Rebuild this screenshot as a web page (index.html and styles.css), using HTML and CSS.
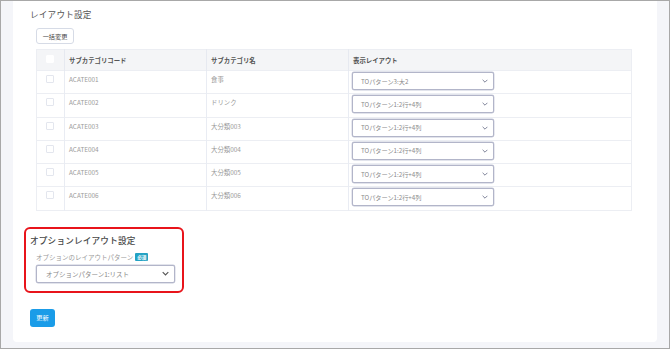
FILE: index.html
```html
<!DOCTYPE html>
<html lang="ja">
<head>
    <meta charset="UTF-8">
    <title>レイアウト設定</title>
    <link rel="stylesheet" href="styles.css">
</head>
<body>
<div class="frame">
    <div class="card">
        <h2 class="section-title">レイアウト設定</h2>

        <div class="table-area">
            <button class="btn-outline">一括変更</button>

            <table class="layout-table">
                <colgroup>
                    <col class="col-check">
                    <col class="col-code">
                    <col class="col-name">
                    <col>
                </colgroup>
                <thead>
                    <tr>
                        <th class="cell-check"><span class="check check-head"></span></th>
                        <th>サブカテゴリコード</th>
                        <th>サブカテゴリ名</th>
                        <th>表示レイアウト</th>
                    </tr>
                </thead>
                <tbody>
                    <tr>
                        <td class="cell-check"><span class="check"></span></td>
                        <td>ACATE001</td>
                        <td>食事</td>
                        <td class="cell-select">
                            <div class="select">TOパターン3:大2<svg class="chev" viewBox="0 0 10 6"><path d="M1 1l4 4 4-4"/></svg></div>
                        </td>
                    </tr>
                    <tr>
                        <td class="cell-check"><span class="check"></span></td>
                        <td>ACATE002</td>
                        <td>ドリンク</td>
                        <td class="cell-select">
                            <div class="select">TOパターン1:2行+4列<svg class="chev" viewBox="0 0 10 6"><path d="M1 1l4 4 4-4"/></svg></div>
                        </td>
                    </tr>
                    <tr>
                        <td class="cell-check"><span class="check"></span></td>
                        <td>ACATE003</td>
                        <td>大分類003</td>
                        <td class="cell-select">
                            <div class="select">TOパターン1:2行+4列<svg class="chev" viewBox="0 0 10 6"><path d="M1 1l4 4 4-4"/></svg></div>
                        </td>
                    </tr>
                    <tr>
                        <td class="cell-check"><span class="check"></span></td>
                        <td>ACATE004</td>
                        <td>大分類004</td>
                        <td class="cell-select">
                            <div class="select">TOパターン1:2行+4列<svg class="chev" viewBox="0 0 10 6"><path d="M1 1l4 4 4-4"/></svg></div>
                        </td>
                    </tr>
                    <tr>
                        <td class="cell-check"><span class="check"></span></td>
                        <td>ACATE005</td>
                        <td>大分類005</td>
                        <td class="cell-select">
                            <div class="select">TOパターン1:2行+4列<svg class="chev" viewBox="0 0 10 6"><path d="M1 1l4 4 4-4"/></svg></div>
                        </td>
                    </tr>
                    <tr>
                        <td class="cell-check"><span class="check"></span></td>
                        <td>ACATE006</td>
                        <td>大分類006</td>
                        <td class="cell-select">
                            <div class="select">TOパターン1:2行+4列<svg class="chev" viewBox="0 0 10 6"><path d="M1 1l4 4 4-4"/></svg></div>
                        </td>
                    </tr>
                </tbody>
            </table>
        </div>

        <!-- 赤枠で強調されたオプション設定 -->
        <div class="option-box">
            <h2 class="section-title">オプションレイアウト設定</h2>
            <div class="form-group">
                <label class="form-label">オプションのレイアウトパターン <span class="badge">必須</span></label>
                <div class="select select-option">オプションパターン1:リスト<svg class="chev" viewBox="0 0 10 6"><path d="M1 1l4 4 4-4"/></svg></div>
            </div>
        </div>

        <button class="btn-primary">更新</button>
    </div>
</div>
</body>
</html>
```

FILE: styles.css
```css
/* --- ベース --- */
body {
    margin: 0;
    font-family: "Noto Sans CJK JP", "Noto Sans", sans-serif;
    color: #444;
}

.frame {
    width: 670px;
    height: 349px;
    box-sizing: border-box;
    border: 1px solid #a8a8a8;
    background: #f4f5f9;
    padding: 0 12px 6px 12px;
    display: flex;
}

.card {
    flex: 1;
    background: #fff;
    border-radius: 0 0 4px 4px;
    padding: 7px 17px 0 17px;
}

.section-title {
    margin: 0;
    font-size: 8.6px;
    line-height: 12px;
    font-weight: 400;
    color: #555;
    letter-spacing: 0.2px;
}

/* テーブル部分 */
.table-area {
    padding-left: 6px;
    width: 596px;
}

.btn-outline {
    display: block;
    margin-top: 8px;
    height: 16px;
    width: 38px;
    padding: 0;
    background: #fff;
    border: 1px solid #d6dbe6;
    border-radius: 3px;
    font-family: inherit;
    font-size: 6.2px;
    color: #444;
}

.layout-table {
    margin-top: 5px;
    width: 596px;
    table-layout: fixed;
    border-collapse: collapse;
    border: 1px solid #eceef3;
    font-size: 6.4px;
}

.col-check { width: 28px; }
.col-code { width: 142px; }
.col-name { width: 142px; }

.layout-table th {
    background: #f4f5f7;
    height: 21px;
    box-sizing: border-box;
    text-align: left;
    font-weight: 700;
    color: #555;
    padding: 0 4px;
    border-left: 1px solid #e6e9f0;
}

.layout-table td {
    height: 23.3px;
    box-sizing: border-box;
    vertical-align: top;
    padding: 4px 4px 0 4px;
    line-height: 9px;
    color: #9a9a9a;
    border-left: 1px solid #e9ecf3;
    border-top: 1px solid #eceef3;
}

.layout-table .cell-check {
    padding: 0;
    border-left: none;
}

.layout-table td.cell-select {
    padding: 1px 3px 0 3px;
}

.check {
    display: block;
    width: 8px;
    height: 8px;
    margin: 4px 0 0 9px;
    border: 1px solid #e3e6ee;
    border-radius: 1px;
    box-sizing: border-box;
}
.check-head {
    margin-top: -3px;
    border-color: #fff;
    background: #fff;
}

/* セレクト */
.select {
    width: 142px;
    height: 18px;
    box-sizing: border-box;
    border: 1px solid #b2b5c9;
    border-radius: 2px;
    box-shadow: 0 0 0 0.4px #c6c9d9;
    display: flex;
    align-items: center;
    justify-content: space-between;
    padding: 0 5px 0 8px;
    font-size: 6.2px;
    color: #8a8a8a;
    background: #fff;
}

.chev {
    width: 6px;
    height: 4px;
    fill: none;
    stroke: #7a7f95;
    stroke-width: 1.6;
}

/* オプション設定 */
.option-box {
    margin: 16px 0 0 -6px;
    width: 160px;
    height: 66px;
    box-sizing: border-box;
    border: 2px solid #e8141b;
    border-radius: 6px;
    padding: 5px 0 0 4px;
}

.option-box .section-title {
    color: #484848;
    font-weight: 500;
}

.form-group {
    padding-left: 6px;
}

.form-label {
    display: flex;
    align-items: center;
    height: 10px;
    margin-top: 6px;
    font-size: 6.5px;
    color: #999;
    gap: 2px;
}

.badge {
    background: #23a2c4;
    color: #fff;
    font-size: 4.6px;
    font-weight: 700;
    line-height: 8px;
    padding: 0 2px;
    border-radius: 1px;
}

.select-option {
    width: 139px;
    margin-top: 3px;
    padding: 0 5px 0 9px;
    color: #888;
    font-size: 6.5px;
}
.select-option .chev {
    stroke: #555;
    width: 7px;
    height: 5px;
}

.btn-primary {
    display: block;
    margin-top: 16px;
    width: 25px;
    height: 18px;
    padding: 0;
    border: none;
    border-radius: 3px;
    background: #1a9ce8;
    color: #fff;
    font-family: inherit;
    font-size: 6.2px;
}
```
